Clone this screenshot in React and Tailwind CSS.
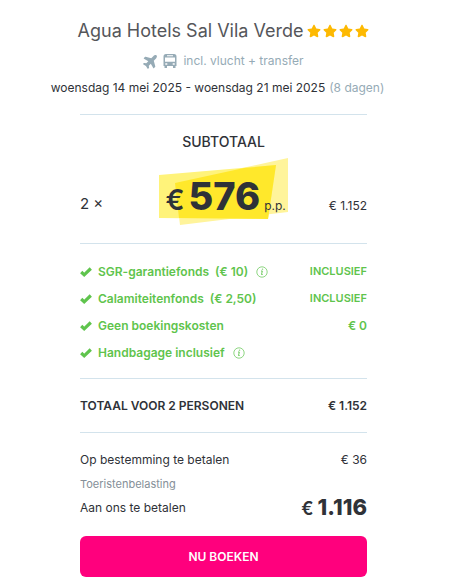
import { FaPlane, FaStar } from "react-icons/fa";

function BusIcon() {
  return (
    <svg viewBox="0 0 14 14" className="size-3.5" fill="currentColor" aria-hidden="true">
      <path
        fillRule="evenodd"
        d="M3 0h8a2.500 2.500 0 0 1 2.500 2.500V12h-1V14h-2.500v-2H4V14H1.500v-2H.5V2.500A2.500 2.500 0 0 1 3 0zM4 1.200v1h6v-1zM2 3.500V7.800h10V3.500zM2.300 9.300v1.500h2V9.300zM9.700 9.300v1.500h2V9.300z"
      />
    </svg>
  );
}

function Check() {
  return (
    <svg viewBox="0 0 12 10" className="h-2.5 w-3 shrink-0" aria-hidden="true">
      <path d="M1.200 5 4.200 7.800 10.800 1.500" fill="none" stroke="currentColor" strokeWidth="3.200" />
    </svg>
  );
}

function Info() {
  return (
    <button type="button" aria-label="Meer informatie" className="ml-2 flex">
      <svg viewBox="0 0 12 12" className="size-3" fill="none" stroke="currentColor" aria-hidden="true">
        <circle cx="6" cy="6" r="5.200" strokeWidth="0.700" />
        <path d="M5 5h1.300L5.500 8.500h1.200" strokeWidth="0.900" />
        <circle cx="6.500" cy="3.200" r="0.400" strokeWidth="0.600" />
      </svg>
    </button>
  );
}

const benefits = [
  { label: "SGR-garantiefonds", amount: "(€ 10)", note: "INCLUSIEF", info: true },
  { label: "Calamiteitenfonds", amount: "(€ 2,50)", note: "INCLUSIEF" },
  { label: "Geen boekingskosten", value: "€ 0" },
  { label: "Handbagage inclusief", info: true },
];

export default function App() {
  return (
    <main className="bg-white pt-4 pr-[83px] pb-2 pl-20 font-['Inter','Liberation_Sans',sans-serif] text-xs text-[#2f3238]">
      <header className="flex flex-col items-center border-b border-[#d3e3ec] pb-3.5">
        <div className="flex items-center gap-1 whitespace-nowrap">
          <h1 className="text-lg leading-[30px] text-[#55565a]">Agua Hotels Sal Vila Verde</h1>
          <div className="flex gap-0.5 text-[#fdb902]" role="img" aria-label="4 sterren">
            <FaStar className="size-3.5" />
            <FaStar className="size-3.5" />
            <FaStar className="size-3.5" />
            <FaStar className="size-3.5" />
          </div>
        </div>
        <p className="flex h-[30px] items-center text-[#96abb6]">
          <FaPlane className="mr-1 size-4 -rotate-45" />
          <BusIcon />
          <span className="ml-1.5">incl. vlucht + transfer</span>
        </p>
        <p className="-mr-6 -ml-9 flex h-6 items-center justify-center gap-1 self-stretch whitespace-nowrap">
          <span>woensdag 14 mei 2025 - woensdag 21 mei 2025</span>
          <span className="text-[#96abb6]">(8 dagen)</span>
        </p>
      </header>

      <section className="border-b border-[#d3e3ec] pt-[17px] pb-[15px]">
        <h2 className="text-center text-sm leading-5 font-medium">SUBTOTAAL</h2>
        <div className="mt-1.5 flex h-[70px] items-end justify-between">
          <span className="w-20 pb-3 text-[15px] leading-6">2 ×</span>
          <div className="relative h-full w-[130px] shrink-0">
            <svg viewBox="0 0 130 70" className="absolute inset-0 size-full" aria-hidden="true">
              <path d="M16 25 129 0v54L21 67z" fill="#fff49b" />
              <path d="M0 17 117 7 109 61 0 60z" fill="#fff37a" />
              <path d="M16 25 85 10 117 7 109 61 20 60z" fill="#ffe82b" />
            </svg>
            <p className="relative flex items-baseline pt-[18px] pl-[7px] leading-10 whitespace-nowrap">
              <span className="text-[28px] font-semibold">€</span>
              <strong className="ml-1 text-[38px] leading-10 font-extrabold">576</strong>
              <span className="ml-1">p.p.</span>
            </p>
          </div>
          <span className="w-20 pb-3 text-right leading-5">€ 1.152</span>
        </div>
      </section>

      <ul className="border-b border-[#d3e3ec] pt-3.5 pb-3 font-semibold text-[#5fc44d]">
        {benefits.map((item) => (
          <li key={item.label} className="flex h-[27px] items-center whitespace-nowrap">
            <Check />
            <span className="ml-1.5">{item.label}</span>
            {item.amount && <span className="ml-1.5">{item.amount}</span>}
            {item.info && <Info />}
            {item.note && <span className="ml-auto text-[11px]">{item.note}</span>}
            {item.value && <span className="ml-auto">{item.value}</span>}
          </li>
        ))}
      </ul>

      <div className="flex h-[54px] items-center justify-between border-b border-[#d3e3ec] font-semibold">
        <span>TOTAAL VOOR 2 PERSONEN</span>
        <span>€ 1.152</span>
      </div>

      <section className="pt-[17px]">
        <div className="flex h-5 items-center justify-between">
          <span>Op bestemming te betalen</span>
          <span>€ 36</span>
        </div>
        <p className="mt-1 text-[11px] leading-5 text-[#858f98]">Toeristenbelasting</p>
        <div className="flex h-7 items-center justify-between">
          <span>Aan ons te betalen</span>
          <span className="flex items-baseline leading-7">
            <span className="text-lg leading-7 font-semibold">€</span>
            <strong className="ml-1 text-[22px] font-extrabold">1.116</strong>
          </span>
        </div>
        <button type="button" className="mt-3.5 h-[41px] w-full rounded-md bg-[#ff007d] font-semibold text-white">
          NU BOEKEN
        </button>
      </section>
    </main>
  );
}
